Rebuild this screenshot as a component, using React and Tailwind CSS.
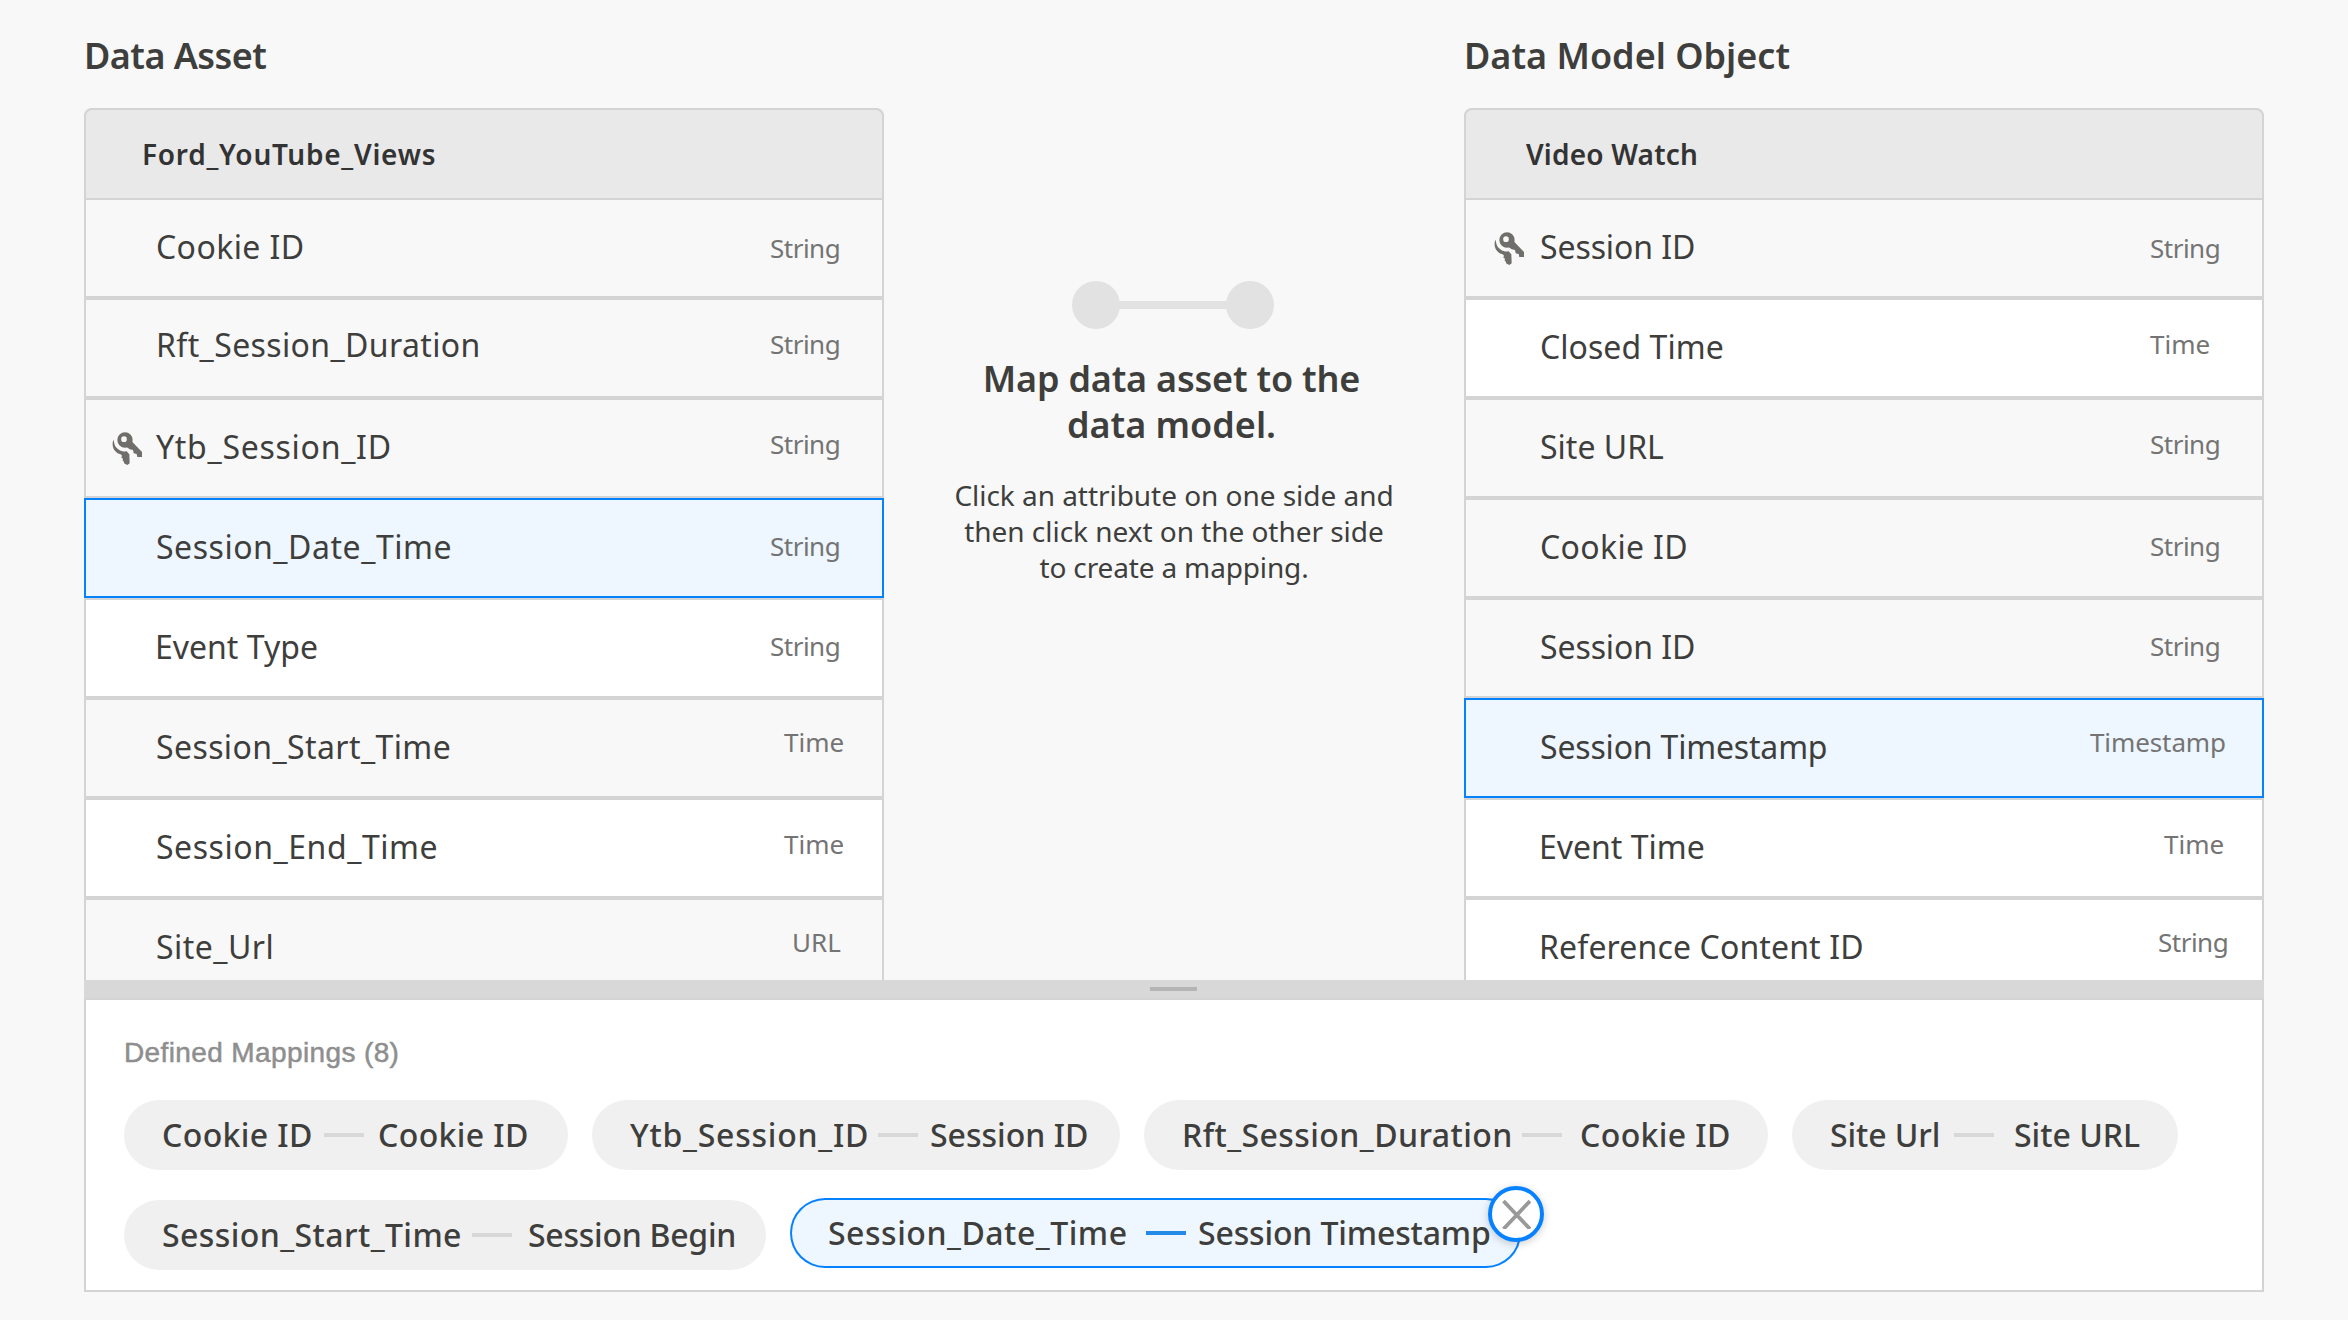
const assetRows = [
  { name: "Cookie ID", nameCls: "tracking-[0.4px] ml-[70px]", type: "String", typeCls: "mt-[30px] left-[684px] tracking-[-0.5px]", bg: "bg-[#f8f8f8]" },
  { name: "Rft_Session_Duration", nameCls: "tracking-[0.38px] ml-[70px] -mt-[2px]", type: "String", typeCls: "mt-[26px] left-[684px] tracking-[-0.5px]", bg: "bg-[#f8f8f8]" },
  { name: "Ytb_Session_ID", nameCls: "tracking-[0.72px] ml-[70px]", type: "String", typeCls: "mt-[26px] left-[684px] tracking-[-0.5px]", bg: "bg-[#f8f8f8]", keyCls: "left-[26px]" },
  { name: "Session_Date_Time", nameCls: "tracking-[0.53px] ml-[70px]", type: "String", typeCls: "mt-[28px] left-[684px] tracking-[-0.5px]", selected: true },
  { name: "Event Type", nameCls: "ml-[69px]", type: "String", typeCls: "mt-[28px] left-[684px] tracking-[-0.5px]", bg: "bg-white" },
  { name: "Session_Start_Time", nameCls: "tracking-[0.4px] ml-[70px]", type: "Time", typeCls: "mt-[24px] left-[698px]", bg: "bg-[#f8f8f8]" },
  { name: "Session_End_Time", nameCls: "tracking-[0.55px] ml-[70px]", type: "Time", typeCls: "mt-[26px] left-[698px]", bg: "bg-white" },
  { name: "Site_Url", nameCls: "tracking-[0.45px] ml-[70px]", type: "URL", typeCls: "mt-[24px] left-[706px]", bg: "bg-[#f8f8f8]" },
];

const modelRows = [
  { name: "Session ID", nameCls: "tracking-[-0.1px] ml-[74px]", type: "String", typeCls: "mt-[30px] left-[684px] tracking-[-0.5px]", bg: "bg-[#f8f8f8]", keyCls: "left-[28px]" },
  { name: "Closed Time", nameCls: "tracking-[0.05px] ml-[74px]", type: "Time", typeCls: "mt-[26px] left-[684px]", bg: "bg-white" },
  { name: "Site URL", nameCls: "ml-[74px]", type: "String", typeCls: "mt-[26px] left-[684px] tracking-[-0.5px]", bg: "bg-[#f8f8f8]" },
  { name: "Cookie ID", nameCls: "tracking-[0.35px] ml-[74px]", type: "String", typeCls: "mt-[28px] left-[684px] tracking-[-0.5px]", bg: "bg-[#f8f8f8]" },
  { name: "Session ID", nameCls: "tracking-[-0.1px] ml-[74px]", type: "String", typeCls: "mt-[28px] left-[684px] tracking-[-0.5px]", bg: "bg-[#f8f8f8]" },
  { name: "Session Timestamp", nameCls: "tracking-[-0.18px] ml-[74px]", type: "Timestamp", typeCls: "mt-[24px] left-[624px] tracking-[-0.1px]", selected: true },
  { name: "Event Time", nameCls: "ml-[73px]", type: "Time", typeCls: "mt-[26px] left-[698px]", bg: "bg-white" },
  { name: "Reference Content ID", nameCls: "tracking-[0.14px] ml-[73px]", type: "String", typeCls: "mt-[24px] left-[692px] tracking-[-0.5px]", bg: "bg-white" },
];

const mappings = [
  [
    { from: "Cookie ID", fromCls: "w-[162px] tracking-[0.38px]", to: "Cookie ID", toCls: "ml-[14px] tracking-[0.38px]", cls: "w-[444px] pl-[38px]" },
    { from: "Ytb_Session_ID", fromCls: "w-[248px] tracking-[0.75px]", to: "Session ID", toCls: "ml-[12px]", cls: "w-[528px] pl-[38px]" },
    { from: "Rft_Session_Duration", fromCls: "w-[340px] tracking-[0.43px]", to: "Cookie ID", toCls: "ml-[18px] tracking-[0.38px]", cls: "w-[624px] pl-[38px]" },
    { from: "Site Url", fromCls: "w-[124px] tracking-[-0.1px]", to: "Site URL", toCls: "ml-[20px]", cls: "w-[386px] pl-[38px]" },
  ],
  [
    { from: "Session_Start_Time", fromCls: "w-[310px] tracking-[0.42px]", to: "Session Begin", toCls: "ml-[16px] tracking-[-0.26px]", cls: "w-[642px] pl-[38px]" },
    { from: "Session_Date_Time", fromCls: "w-[318px] tracking-[0.52px]", to: "Session Timestamp", toCls: "ml-[12px] tracking-[-0.15px]", cls: "w-[731px] pl-[38px]", selected: true },
  ],
];

function KeysIcon({ className }) {
  return (
    <svg className={`absolute top-[32px] h-[33px] w-[30px] ${className}`} viewBox="18 15 90 99" fill="#706e6b">
      <path fillRule="evenodd" d="M57 16a23 23 0 1 0 0 46a23 23 0 1 0 0-46ZM54 28a8.5 8.5 0 1 1 0 17a8.5 8.5 0 1 1 0-17Z" />
      <path d="M77 43 108 75V90H94L92 81L83 79L81 69L71 67L62 60Z" />
      <path d="M22 38C15 58 25 77 44 82L48 86L46 92L51 95L50 101L54 104V109L64 114L71 109L70 82L62 73C45 75 31 66 26 53C24 47 24 42 22 38Z" />
    </svg>
  );
}

function Row({ row }) {
  const frame = row.selected
    ? "-mt-[2px] mb-[2px] h-[100px] border-2 border-[#0782ff] bg-[#eef6ff]"
    : `h-[100px] border-x-2 border-b-4 border-[#d4d4d4] ${row.bg}`;
  return (
    <div className={`relative flex shrink-0 ${frame}`}>
      {row.keyCls && <KeysIcon className={row.keyCls} />}
      <span className={`pt-[25px] text-[32px] leading-[43px] whitespace-nowrap text-[#3e3e3c] ${row.nameCls}`}>{row.name}</span>
      <span className={`absolute top-0 text-[26px] leading-[36px] whitespace-nowrap text-[#747474] ${row.typeCls}`}>{row.type}</span>
    </div>
  );
}

function Panel({ title, titleCls, header, headerCls, rows }) {
  return (
    <section className="flex w-[800px] shrink-0 flex-col">
      <h2 className={`h-[108px] pt-[31px] text-[36px] leading-[49px] font-semibold text-[#3e3e3c] ${titleCls}`}>{title}</h2>
      <div className="flex h-[872px] flex-col overflow-hidden rounded-t-[8px] bg-[#d4d4d4]">
        <div className="h-[92px] shrink-0 rounded-t-[8px] border-2 border-[#d4d4d4] bg-[#e9e9e9] pt-[25px]">
          <h3 className={`text-[28px] leading-[38px] font-semibold text-[#333333] ${headerCls}`}>{header}</h3>
        </div>
        {rows.map((row, i) => (
          <Row key={i} row={row} />
        ))}
      </div>
    </section>
  );
}

function CloseButton() {
  return (
    <button className="absolute -top-[12px] -right-[23px] flex size-[56px] items-center justify-center rounded-full border-4 border-[#0782ff] bg-white shadow-[0_2px_8px_rgba(0,0,0,0.2)]">
      <svg className="size-[30px]" viewBox="0 0 30 30" stroke="#999999" strokeWidth="3.8" fill="none">
        <path d="M2.5 2 29 30M29 2 2.5 30" />
      </svg>
    </button>
  );
}

function Pill({ m }) {
  return (
    <div className={`relative flex h-[70px] rounded-full whitespace-nowrap ${m.cls} ${m.selected ? "-mt-[2px] bg-[#eef6ff] inset-ring-2 inset-ring-[#0782ff]" : "bg-[#f0f0f0]"}`}>
      <span className={`shrink-0 pt-[13px] ${m.fromCls}`}>{m.from}</span>
      <span className={`mt-[33px] h-[4px] w-[40px] shrink-0 ${m.selected ? "bg-[#2589e8]" : "bg-[#d8d8d8]"}`} />
      <span className={`pt-[13px] ${m.toCls}`}>{m.to}</span>
      {m.selected && <CloseButton />}
    </div>
  );
}

export default function App() {
  return (
    <div className="h-[1320px] w-[2348px] overflow-hidden bg-[#f8f8f8] px-[84px] font-['Noto_Sans',sans-serif]">
      <div className="flex h-[980px]">
        <Panel title="Data Asset" titleCls="tracking-[-0.55px]" header="Ford_YouTube_Views" headerCls="pl-[56px] tracking-[0.76px]" rows={assetRows} />
        <div className="flex flex-1 flex-col items-center pt-[281px] text-center text-[#3e3e3c]">
          <div className="mr-[2px] flex items-center">
            <span className="size-[48px] rounded-full bg-[#e2e2e2]" />
            <span className="-mx-[2px] h-[8px] w-[110px] bg-[#e2e2e2]" />
            <span className="size-[48px] rounded-full bg-[#e2e2e2]" />
          </div>
          <h2 className="mt-[27px] mr-[5px] text-[36px] leading-[46px] font-semibold">
            <span className="block tracking-[-0.2px]">Map data asset to the</span>
            <span className="block">data model.</span>
          </h2>
          <p className="mt-[29px] text-[28px] leading-[36px] tracking-[-0.04px]">
            Click an attribute on one side and
            <br />
            then click next on the other side
            <br />
            <span className="tracking-[-0.15px]">to create a mapping.</span>
          </p>
        </div>
        <Panel title="Data Model Object" titleCls="" header="Video Watch" headerCls="pl-[60px] tracking-[0.2px]" rows={modelRows} />
      </div>

      <div className="flex h-[18px] justify-center bg-[#d8d8d8] pt-[7px]">
        <span className="mr-px h-[4px] w-[47px] bg-[#b4b4b4]" />
      </div>
      <div className="h-[294px] border-2 border-[#d4d4d4] bg-white pl-[38px]">
        <h4 className="h-[100px] pt-[37px] font-['Liberation_Sans',Arial,sans-serif] text-[28px] leading-[32px] tracking-[0.38px] text-[#8e8e8e] [-webkit-text-stroke:0.5px_#8e8e8e]">Defined Mappings (8)</h4>
        <div className="flex flex-col gap-[30px] text-[32px] leading-[43px] font-medium text-[#3e3e3c]">
          {mappings.map((line, i) => (
            <div key={i} className="flex h-[70px] items-start gap-[24px]">
              {line.map((m, j) => (
                <Pill key={j} m={m} />
              ))}
            </div>
          ))}
        </div>
      </div>
    </div>
  );
}
